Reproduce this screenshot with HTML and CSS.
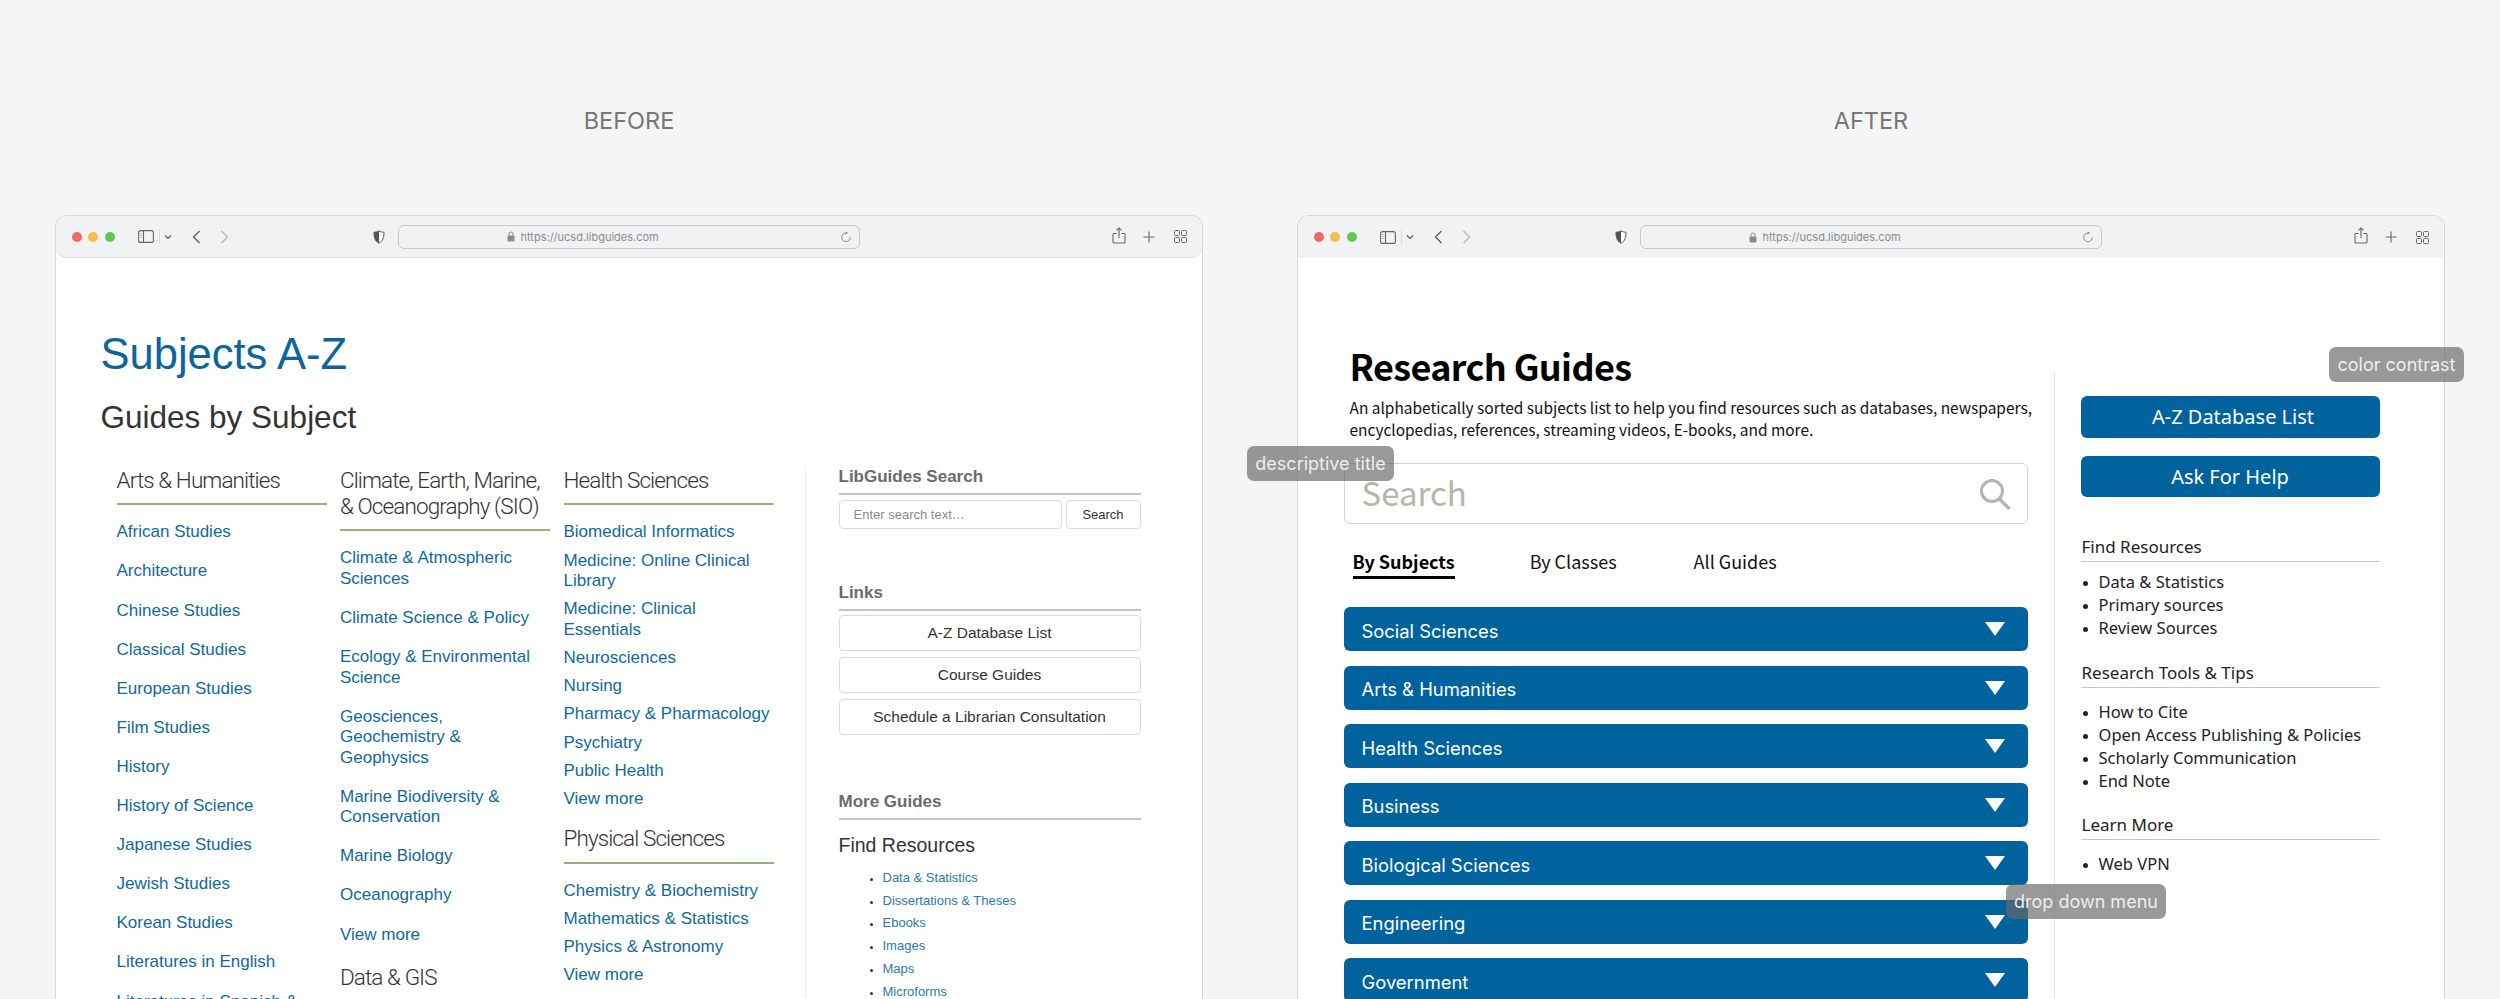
FILE: index.html
```html
<!DOCTYPE html>
<html lang="en">
<head>
<meta charset="utf-8">
<title>Before and after</title>
<link rel="stylesheet" href="styles.css">
</head>
<body>
<svg class="defs" width="0" height="0" aria-hidden="true">
  <symbol id="i-sidebar" viewBox="0 0 16 13"><rect x=".6" y=".6" width="14.8" height="11.8" rx="2" fill="none" stroke="#666" stroke-width="1.1"/><path d="M5.5 .6v11.8" stroke="#666" stroke-width="1.1"/><path d="M2.5 3.5h1M2.5 5.5h1M2.5 7.5h1" stroke="#777" stroke-width=".8"/></symbol>
  <symbol id="i-down" viewBox="0 0 8 6"><path d="M1 1.5l3 3 3-3" fill="none" stroke="#555" stroke-width="1.1"/></symbol>
  <symbol id="i-back" viewBox="0 0 9 14"><path d="M7.5 1L1.5 7l6 6" fill="none" stroke="#555" stroke-width="1.2"/></symbol>
  <symbol id="i-fwd" viewBox="0 0 9 14"><path d="M1.5 1l6 6-6 6" fill="none" stroke="#b5b5b8" stroke-width="1.2"/></symbol>
  <symbol id="i-shield" viewBox="0 0 12 14"><path d="M6 .8c1.5 1 3.2 1.4 5 1.5 0 5-1 9-5 10.9C2 11.300 1 7.300 1 2.300 2.800 2.200 4.500 1.800 6 .8z" fill="#fff" stroke="#555" stroke-width="1"/><path d="M6 .8c-1.500 1-3.200 1.400-5 1.500 0 5 1 9 5 10.900z" fill="#555"/></symbol>
  <symbol id="i-lock" viewBox="0 0 8 11"><rect x=".5" y="4.500" width="7" height="6" rx="1" fill="#8a8a8a"/><path d="M2 4.500V3a2 2 0 0 1 4 0v1.500" fill="none" stroke="#8a8a8a"/></symbol>
  <symbol id="i-reload" viewBox="0 0 12 12"><path d="M6 2a4.300 4.300 0 1 0 4.300 4.300" fill="none" stroke="#8a8a8a" stroke-width="1"/><path d="M5.500 .3L8 2 5.500 3.700z" fill="#8a8a8a"/></symbol>
  <symbol id="i-share" viewBox="0 0 14 17"><path d="M4.500 6.500H2a1 1 0 0 0-1 1V15a1 1 0 0 0 1 1h10a1 1 0 0 0 1-1V7.500a1 1 0 0 0-1-1H9.500" fill="none" stroke="#666" stroke-width="1.100"/><path d="M7 11V1M4.500 3.300L7 .9l2.500 2.400" fill="none" stroke="#666" stroke-width="1.100"/></symbol>
  <symbol id="i-plus" viewBox="0 0 12 12"><path d="M6 .5v11M.5 6h11" stroke="#666" stroke-width="1.100"/></symbol>
  <symbol id="i-grid" viewBox="0 0 13 13"><g fill="none" stroke="#666" stroke-width="1"><rect x=".5" y=".5" width="5" height="5" rx="1"/><rect x="7.500" y=".5" width="5" height="5" rx="1"/><rect x=".5" y="7.500" width="5" height="5" rx="1"/><rect x="7.500" y="7.500" width="5" height="5" rx="1"/></g></symbol>
</svg>

<main class="page">
  <section class="panel">
    <h2 class="panel-label">BEFORE</h2>
    <div class="window">
      <div class="toolbar">
        <span class="dots"><i class="dot dot-red"></i><i class="dot dot-yellow"></i><i class="dot dot-green"></i></span>
        <svg class="ic-sidebar"><use href="#i-sidebar"/></svg><span class="tb-sep"></span>
        <svg class="ic-down"><use href="#i-down"/></svg>
        <svg class="ic-back"><use href="#i-back"/></svg>
        <svg class="ic-fwd"><use href="#i-fwd"/></svg>
        <svg class="ic-shield"><use href="#i-shield"/></svg>
        <div class="urlbar"><svg class="ic-lock"><use href="#i-lock"/></svg><span class="url">https://ucsd.libguides.com</span><svg class="ic-reload"><use href="#i-reload"/></svg></div>
        <svg class="ic-share"><use href="#i-share"/></svg>
        <svg class="ic-plus"><use href="#i-plus"/></svg>
        <svg class="ic-grid"><use href="#i-grid"/></svg>
      </div>
      <div class="old">
        <h1 class="old-title">Subjects A-Z</h1>
        <p class="old-sub">Guides by Subject</p>
        <div class="old-body">
          <div class="old-cols">
            <div class="old-col">
              <h3 class="cat">Arts &amp; Humanities</h3>
              <ul class="subj subj-wide">
                <li>African Studies</li><li>Architecture</li><li>Chinese Studies</li><li>Classical Studies</li><li>European Studies</li><li>Film Studies</li><li>History</li><li>History of Science</li><li>Japanese Studies</li><li>Jewish Studies</li><li>Korean Studies</li><li>Literatures in English</li><li>Literatures in Spanish &amp; Portuguese</li>
              </ul>
            </div>
            <div class="old-col">
              <h3 class="cat">Climate, Earth, Marine, &amp; Oceanography (SIO)</h3>
              <ul class="subj subj-wide">
                <li>Climate &amp; Atmospheric Sciences</li><li>Climate Science &amp; Policy</li><li>Ecology &amp; Environmental Science</li><li>Geosciences, Geochemistry &amp; Geophysics</li><li>Marine Biodiversity &amp; Conservation</li><li>Marine Biology</li><li>Oceanography</li><li>View more</li>
              </ul>
              <h3 class="cat">Data &amp; GIS</h3>
            </div>
            <div class="old-col">
              <h3 class="cat">Health Sciences</h3>
              <ul class="subj subj-tight">
                <li>Biomedical Informatics</li><li>Medicine: Online Clinical Library</li><li>Medicine: Clinical Essentials</li><li>Neurosciences</li><li>Nursing</li><li>Pharmacy &amp; Pharmacology</li><li>Psychiatry</li><li>Public Health</li><li>View more</li>
              </ul>
              <h3 class="cat">Physical Sciences</h3>
              <ul class="subj subj-tight">
                <li>Chemistry &amp; Biochemistry</li><li>Mathematics &amp; Statistics</li><li>Physics &amp; Astronomy</li><li>View more</li>
              </ul>
            </div>
          </div>
          <aside class="old-side">
            <h4 class="box-title">LibGuides Search</h4>
            <div class="old-search"><span class="old-input">Enter search text…</span><span class="old-go">Search</span></div>
            <h4 class="box-title box-links">Links</h4>
            <div class="old-links"><span class="old-link">A-Z Database List</span><span class="old-link">Course Guides</span><span class="old-link">Schedule a Librarian Consultation</span></div>
            <h4 class="box-title box-more">More Guides</h4>
            <p class="more-head">Find Resources</p>
            <ul class="more-list"><li>Data &amp; Statistics</li><li>Dissertations &amp; Theses</li><li>Ebooks</li><li>Images</li><li>Maps</li><li>Microforms</li></ul>
          </aside>
        </div>
      </div>
    </div>
  </section>

  <section class="panel panel-after">
    <h2 class="panel-label">AFTER</h2>
    <div class="window">
      <div class="toolbar toolbar-flat">
        <span class="dots"><i class="dot dot-red"></i><i class="dot dot-yellow"></i><i class="dot dot-green"></i></span>
        <svg class="ic-sidebar"><use href="#i-sidebar"/></svg><span class="tb-sep"></span>
        <svg class="ic-down"><use href="#i-down"/></svg>
        <svg class="ic-back"><use href="#i-back"/></svg>
        <svg class="ic-fwd"><use href="#i-fwd"/></svg>
        <svg class="ic-shield"><use href="#i-shield"/></svg>
        <div class="urlbar"><svg class="ic-lock"><use href="#i-lock"/></svg><span class="url">https://ucsd.libguides.com</span><svg class="ic-reload"><use href="#i-reload"/></svg></div>
        <svg class="ic-share"><use href="#i-share"/></svg>
        <svg class="ic-plus"><use href="#i-plus"/></svg>
        <svg class="ic-grid"><use href="#i-grid"/></svg>
      </div>
      <div class="new">
        <div class="new-main">
          <h1 class="new-title">Research Guides</h1>
          <p class="new-desc">An alphabetically sorted subjects list to help you find resources such as databases, newspapers, encyclopedias, references, streaming videos, E-books, and more.</p>
          <div class="new-search">
            <span class="new-placeholder">Search</span>
            <svg class="ic-search" viewBox="0 0 32 32"><circle cx="13" cy="13" r="10.500" fill="none" stroke="#b8b3ab" stroke-width="3"/><path d="M20.500 21l10 10" stroke="#b8b3ab" stroke-width="3.500"/></svg>
          </div>
          <nav class="tabs"><span class="tab tab-on">By Subjects</span><span class="tab tab-mid">By Classes</span><span class="tab tab-end">All Guides</span></nav>
          <div class="acc">
            <div class="acc-row">Social Sciences<i class="tri"></i></div>
            <div class="acc-row">Arts &amp; Humanities<i class="tri"></i></div>
            <div class="acc-row">Health Sciences<i class="tri"></i></div>
            <div class="acc-row">Business<i class="tri"></i></div>
            <div class="acc-row">Biological Sciences<i class="tri"></i></div>
            <div class="acc-row">Engineering<i class="tri"></i></div>
            <div class="acc-row">Government<i class="tri"></i></div>
          </div>
        </div>
        <aside class="new-side">
          <a class="cta cta-first">A-Z Database List</a>
          <a class="cta">Ask For Help</a>
          <h4 class="side-head side-first">Find Resources</h4>
          <ul class="side-list"><li>Data &amp; Statistics</li><li>Primary sources</li><li>Review Sources</li></ul>
          <h4 class="side-head side-second">Research Tools &amp; Tips</h4>
          <ul class="side-list side-list-gap"><li>How to Cite</li><li>Open Access Publishing &amp; Policies</li><li>Scholarly Communication</li><li>End Note</li></ul>
          <h4 class="side-head">Learn More</h4>
          <ul class="side-list side-list-gap"><li>Web VPN</li></ul>
        </aside>
      </div>
    </div>
  </section>

  <span class="note note-title">descriptive title</span>
  <span class="note note-contrast">color contrast</span>
  <span class="note note-menu">drop down menu</span>
</main>
</body>
</html>
```
FILE: styles.css
```css
* { box-sizing: border-box; }
html, body { margin: 0; height: 999px; overflow: hidden; }
body { background: #f5f5f5; font-family: "Liberation Sans", Arial, sans-serif; }
.defs { position: absolute; }
ul { list-style: none; margin: 0; padding: 0; }
h1, h2, h3, h4, p { margin: 0; font-weight: 400; }

.page { position: relative; display: flex; gap: 94px; height: 999px; padding-left: 55px; overflow: hidden; }
.panel { width: 1148px; flex: none; display: flex; flex-direction: column; }
.panel-label { height: 215px; padding-top: 107px; text-align: center; font: 400 23.500px/28px Inter, sans-serif; color: #777; }

.window { flex: 1; min-height: 0; overflow: hidden; background: #fff; border: 1.5px solid #d9d9dc; border-bottom: 0; border-radius: 12px 12px 0 0; }

.toolbar { height: 42px; display: flex; align-items: center; background: #f1f2f4; border-bottom: 1.5px solid #d9d9dc; border-radius: 0 0 10px 10px; padding-left: 15.500px; }
.toolbar-flat { border-bottom: 0; border-radius: 0; }
.toolbar svg { flex: none; display: block; }
.dots { display: flex; gap: 6.500px; }
.dot { width: 10px; height: 10px; border-radius: 50%; display: block; }
.dot-red { background: #ee6a5f; }
.dot-yellow { background: #f5bd4f; }
.dot-green { background: #61c453; }
.ic-sidebar { width: 16px; height: 13px; margin-left: 23px; }
.tb-sep { width: 1px; height: 15px; background: #dcdcdf; margin-left: 5px; }
.ic-down { width: 8px; height: 6px; margin-left: 4px; }
.ic-back { width: 9px; height: 14px; margin-left: 20px; }
.ic-fwd { width: 9px; height: 14px; margin-left: 19px; }
.ic-shield { width: 12px; height: 14px; margin-left: 144.500px; }
.urlbar { width: 462px; height: 24px; margin-left: 12.500px; border: 1.5px solid #c8c9cc; border-radius: 6px; background: #f1f2f4; display: flex; align-items: center; padding-left: 108px; }
.ic-lock { width: 8px; height: 11px; }
.url { margin-left: 6px; font: 400 11px/14px Inter, sans-serif; color: #8c8c8c; width: 316px; }
.ic-reload { width: 12px; height: 12px; margin-left: 3px; }
.ic-share { width: 14px; height: 17px; margin-left: 252px; margin-top: -3px; }
.ic-plus { width: 12px; height: 12px; margin-left: 17.500px; }
.ic-grid { width: 13px; height: 13px; margin-left: 18.500px; }

/* before */
.old { padding: 71px 0 0 44.500px; }
.old-title { font-size: 43.500px; line-height: 50px; color: #0a659f; }
.old-sub { font-size: 31.500px; line-height: 36px; color: #333; margin-top: 19.500px; }
.old-body { display: flex; margin-top: 32.400px; }
.old-cols { display: grid; grid-template-columns: repeat(3, 210px); column-gap: 13.500px; width: 660px; margin-left: 16px; flex: none; align-items: start; }
.cat { font: 300 22.500px/26px Roboto, sans-serif; color: #333; padding-bottom: 10.500px; border-bottom: 2px solid #93b274; letter-spacing: -.9px; }
.subj { font-size: 17px; line-height: 20.500px; color: #0f6a9c; padding-top: 17px; }
.subj li { margin-bottom: 18.600px; }
.subj-tight li { margin-bottom: 7.700px; }
.subj-tight { padding-bottom: 8px; }
.old-side { width: 336px; margin-left: 28px; padding-left: 33px; border-left: 1px solid #eee; flex: none; }
.box-title { font-weight: 700; font-size: 17px; line-height: 20px; color: #6b6b6b; padding-bottom: 6px; border-bottom: 2px solid #c4c4c4; width: 302px; }
.box-links { margin-top: 54px; }
.box-more { margin-top: 56.500px; }
.old-search { display: flex; gap: 4px; width: 302px; margin-top: 5px; }
.old-input, .old-go, .old-link { border: 1.5px solid #dcdcdc; border-radius: 4px; display: flex; align-items: center; }
.old-input { width: 223px; height: 29px; padding-left: 14px; font-size: 13px; color: #8a8a8a; }
.old-go { width: 75px; height: 29px; justify-content: center; font-size: 13px; color: #333; }
.old-links { display: flex; flex-direction: column; gap: 6px; width: 302px; margin-top: 4.500px; }
.old-link { height: 36px; justify-content: center; font-size: 15.500px; color: #333; }
.more-head { font-size: 19.500px; line-height: 24px; color: #333; margin-top: 13px; }
.more-list { list-style: disc; padding-left: 44px; font-size: 13px; line-height: 15px; color: #2a7ba8; margin-top: 13px; }
.more-list li { margin-bottom: 7.800px; }
.more-list li::marker { color: #333; font-size: 11px; }

/* after */
.new { display: flex; padding-left: 45.500px; font-family: "Noto Sans", sans-serif; }
.new-main { width: 684px; flex: none; padding-top: 85px; }
.new-title { font: 700 36px/44px "Noto Sans CJK JP", sans-serif; color: #000; padding-left: 6px; letter-spacing: -.65px; }
.new-desc { font: 400 15.450px/22px "Noto Sans CJK JP", sans-serif; color: #111; padding-left: 6px; margin-top: 8.500px; width: 700px; }
.new-search { height: 61px; margin-top: 23.500px; border: 1.5px solid #d5d2cc; border-radius: 6px; display: flex; align-items: center; justify-content: space-between; padding: 0 16px 0 17px; }
.new-placeholder { font: 400 33px/40px "Noto Sans CJK JP", sans-serif; color: #b8b3ab; padding-bottom: 3px; }
.ic-search { width: 32px; height: 32px; }
.tabs { display: flex; margin-top: 24px; padding-left: 9px; font: 400 18px/26px "Noto Sans CJK JP", sans-serif; color: #111; }
.tab { padding-bottom: 2px; border-bottom: 3px solid transparent; }
.tab-on { font-weight: 700; border-bottom-color: #000; color: #000; }
.tab-mid { margin-left: 75px; }
.tab-end { margin-left: 77px; }
.acc { margin-top: 28.400px; display: flex; flex-direction: column; gap: 14.500px; }
.acc-row { height: 44px; flex: none; background: #01639d; border-radius: 6px; color: #fff; font: 400 18.400px/24px Inter, sans-serif; display: flex; align-items: center; justify-content: space-between; padding: 3px 23px 0 18px; }
.tri { width: 0; height: 0; margin-top: -3px; border-left: 10.500px solid transparent; border-right: 10.500px solid transparent; border-top: 14px solid #fff; }
.new-side { width: 327px; flex: none; margin-left: 26px; margin-top: 113px; padding: 25px 0 0 26px; border-left: 1px solid #e8e8e8; }
.cta { display: flex; height: 41.500px; align-items: center; justify-content: center; width: 299px; background: #01639d; border-radius: 6px; color: #fff; font-size: 20px; margin-bottom: 18px; }
.cta-first { padding-left: 6px; }
.side-head { width: 299px; font-size: 17px; line-height: 22px; color: #222; padding: 0 0 3px 1px; border-bottom: 1.5px solid #c9c9c9; margin-top: 22px; }
.side-first { margin-top: 39px; }
.side-second { margin-top: 23.500px; }
.side-list { list-style: disc; padding-left: 18px; font-size: 16.500px; line-height: 23px; color: #222; margin-top: 7.500px; }
.side-list-gap { margin-top: 12px; }
.side-list li::marker { font-size: 13px; }

.note { position: absolute; height: 35px; border-radius: 7px; background: rgba(105,105,105,.68); color: #eee; font: 400 18px/35px Inter, sans-serif; text-align: center; white-space: nowrap; }
.note-title { left: 1247px; top: 446px; width: 147px; }
.note-contrast { left: 2329px; top: 347px; width: 135px; }
.note-menu { left: 2006px; top: 884px; width: 160px; }
```
